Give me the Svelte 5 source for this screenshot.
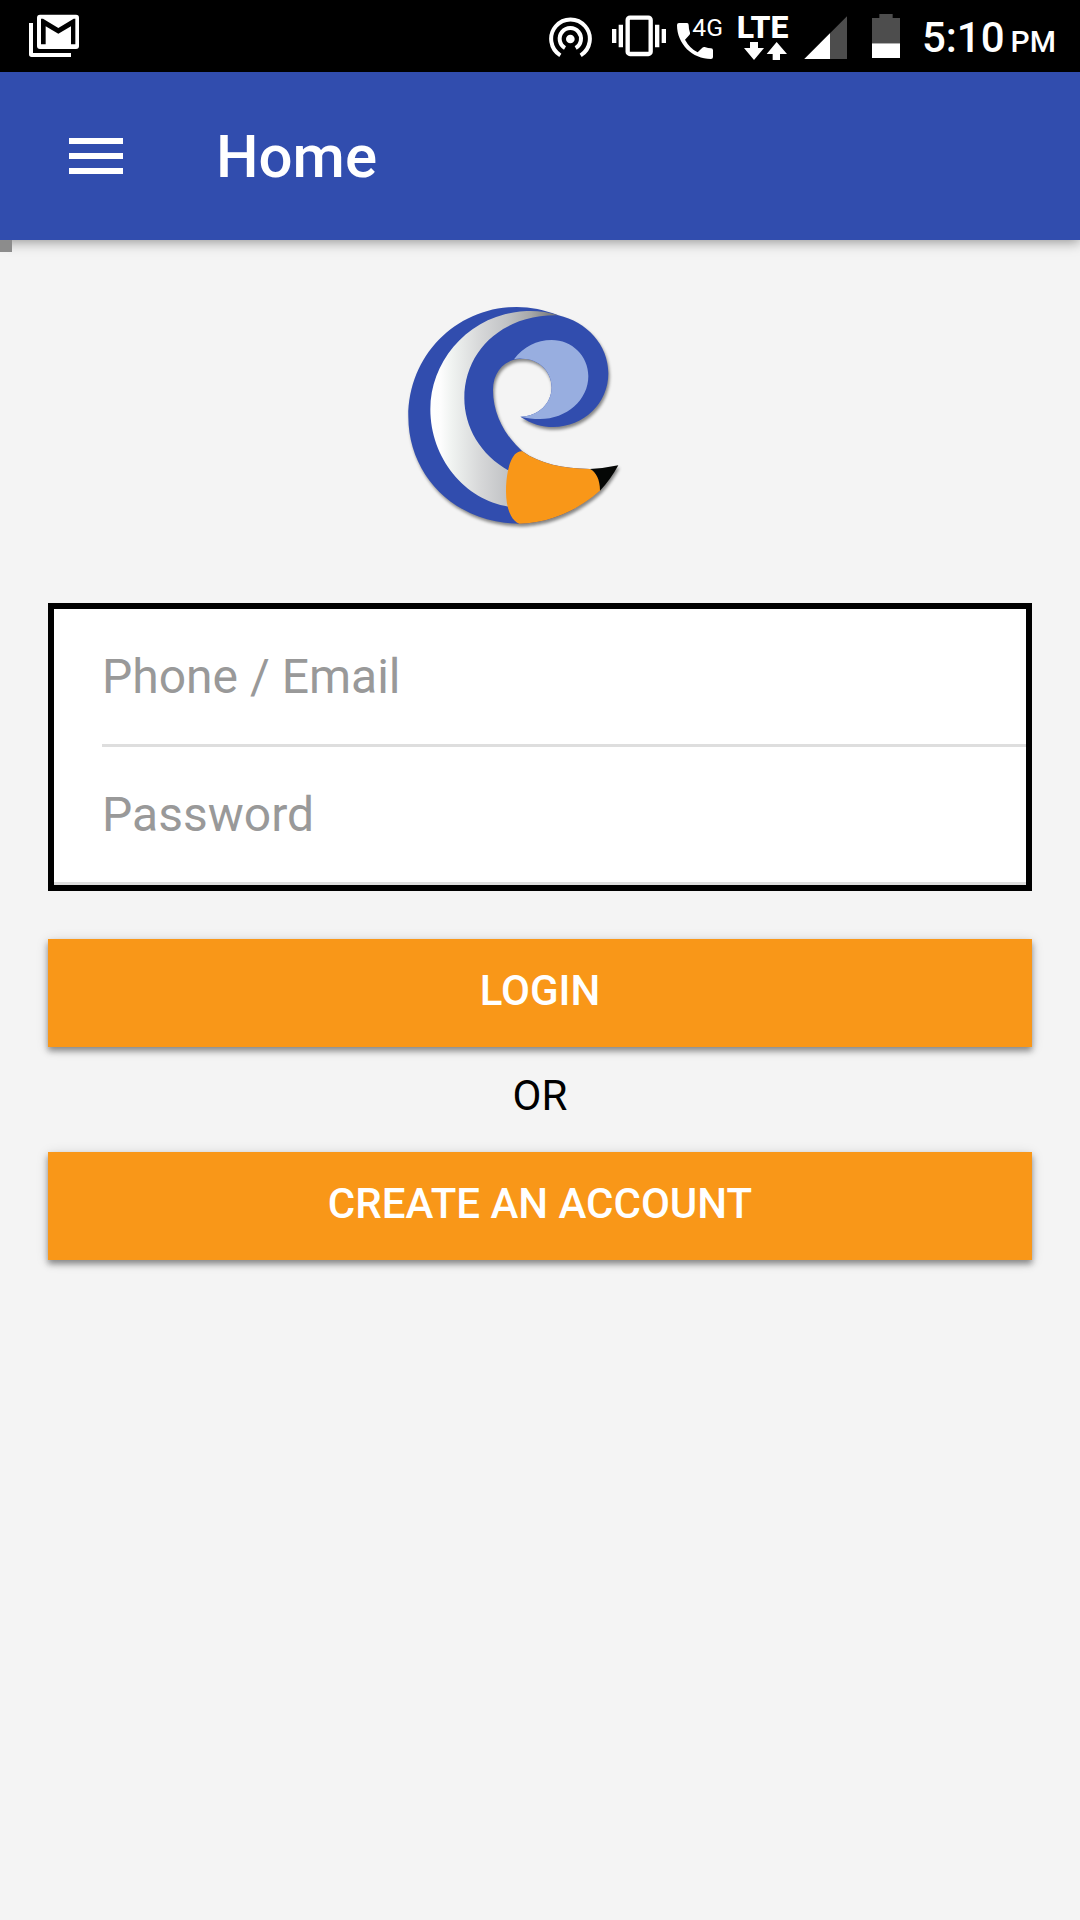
<script>
  let account = $state('');
  let password = $state('');
</script>

<div class="screen">
  <div class="status">
    <svg class="mail" viewBox="84 0 156 216" aria-hidden="true">
      <path d="M87 69h12v90h114v12H95q-8 0-8-8z" fill="#fff" />
      <rect x="111" y="44" width="126" height="103" rx="9" fill="#fff" />
      <path d="M123 133V56h6l46 28 46-28h5v77h-13V79l-38 22-38-22v54z" fill="#000" />
    </svg>
    <div class="tray">
      <svg class="hotspot" viewBox="54 0 165 216" aria-hidden="true">
        <circle cx="121" cy="117" r="13" fill="#fff" />
        <g fill="none" stroke="#fff" stroke-width="12">
          <path d="M105 144a32 32 0 1 1 32 0" />
          <path d="M91 166a58 58 0 1 1 61 0" />
        </g>
      </svg>
      <svg class="vibrate" viewBox="243 0 168 216" aria-hidden="true">
        <rect x="293" y="53" width="69" height="109" rx="7" fill="none" stroke="#fff" stroke-width="13" />
        <path d="M246 87h13v42h-13zM266 74h13v68h-13zM375 74h13v68h-13zM395 87h13v42h-13z" fill="#fff" />
      </svg>
      <svg class="call" viewBox="435 0 162 216" aria-hidden="true">
        <path d="M447 69h24q5 0 5 6 0 12 4 23 1 4-2 7l-13 14q14 26 38 38l14-14q3-3 7-2 11 4 19 4 6 0 6 6v20q0 6-6 6C487 177 441 132 441 75q0-6 6-6z" fill="#fff" />
        <text class="net" x="487" y="109">4G</text>
      </svg>
      <svg class="lte" viewBox="621 0 177 216" aria-hidden="true">
        <text class="band" x="620" y="113">LTE</text>
        <path d="M660 126h24v18h18l-30 36-30-36h18zM740 126l31 36h-21v18h-22v-18h-18z" fill="#fff" />
      </svg>
      <svg class="signal" viewBox="42 0 177 216" aria-hidden="true">
        <path d="M171 49v128H43z" fill="#4d4d4d" />
        <path d="M120 100v77H43z" fill="#fff" />
      </svg>
      <svg class="battery" viewBox="243 0 129 216" aria-hidden="true">
        <path d="M268 42h40v12h22v76h-84V54h22z" fill="#4d4d4d" />
        <path d="M246 130h84v44h-84z" fill="#fff" />
      </svg>
      <div class="clock">5:10<span>PM</span></div>
    </div>
  </div>

  <header>
    <button class="menu" aria-label="Open menu">
      <i></i><i></i><i></i>
    </button>
    <h1>Home</h1>
  </header>

  <main>
    <div class="marker"></div>
    <svg class="logo" viewBox="0 0 900 750" role="img" aria-label="Swan logo">
      <defs>
        <linearGradient id="feather" gradientUnits="userSpaceOnUse" x1="121" y1="0" x2="500" y2="0">
          <stop offset="0" stop-color="#fff" />
          <stop offset="0.08" stop-color="#fdfdfd" />
          <stop offset="0.17" stop-color="#f0f3f1" />
          <stop offset="0.4" stop-color="#d6d7d8" />
          <stop offset="0.6" stop-color="#c2c4c6" />
          <stop offset="0.8" stop-color="#a6a7a8" />
          <stop offset="1" stop-color="#707173" />
        </linearGradient>
        <filter id="shade" x="-10%" y="-10%" width="120%" height="120%" color-interpolation-filters="sRGB">
          <feDropShadow dx="4" dy="8" stdDeviation="4" flood-color="#000" flood-opacity="0.45" />
        </filter>
      </defs>
      <g filter="url(#shade)">
        <path fill="#314dae" d="M505 76C462 59 422 51 380 51C200 51 55 195 55 380C55 558 198 701 388 701C470 701 560 665 630 601L600 537C520 536 450 522 397 484C342 434 309 370 309 300C309 245 345 206 397 206C446 206 485 244 485 292C485 340 445 380 391 380C425 402 455 411 490 411C582 411 655 340 655 250C655 165 590 95 505 76Z" />
        <path fill="#98aee0" d="M372 208C400 170 440 150 485 150C546 150 595 198 595 258C595 330 530 387 450 387C430 387 410 385 391 380C445 380 485 340 485 292C485 244 446 206 397 206Q383 205 372 208Z" />
        <path fill="url(#feather)" d="M505 76C475 66 445 62 410 63C240 70 121 210 121 358C121 505 225 630 356 650L358 543C270 495 223 410 223 325C223 180 340 72 505 76Z" />
        <path fill="#f99718" d="M397 484C365 480 348 540 348 605C348 650 362 692 388 701C470 701 560 665 632 600C630 570 622 545 599 537C520 536 450 522 397 484Z" />
        <path fill="#050706" d="M600 537Q643 535 685 526C670 553 652 580 630 602C630 568 618 546 600 537Z" />
      </g>
    </svg>

    <form onsubmit={(e) => e.preventDefault()}>
      <div class="fields">
        <input type="text" placeholder="Phone / Email" aria-label="Phone / Email" bind:value={account} />
        <input type="password" placeholder="Password" aria-label="Password" bind:value={password} />
      </div>
      <button class="action" type="submit">LOGIN</button>
      <p>OR</p>
      <button class="action" type="button">CREATE AN ACCOUNT</button>
    </form>
  </main>
</div>

<style>
  :global(body) {
    margin: 0;
    background: #f4f4f4;
  }
  .screen {
    display: flex;
    flex-direction: column;
    min-height: 100vh;
    background: #f4f4f4;
    color: #000;
    font-family: Roboto, "Liberation Sans", sans-serif;
  }
  .status {
    display: flex;
    justify-content: space-between;
    padding: 0 24px 0 28px;
    background: #000;
    color: #fff;
  }
  .status svg {
    height: 72px;
    flex: none;
  }
  .tray {
    display: flex;
    gap: 8px;
  }
  .mail { width: 52px; }
  .hotspot { width: 55px; }
  .vibrate { width: 56px; }
  .call { width: 54px; }
  .lte { width: 59px; }
  .signal { width: 59px; }
  .battery { width: 43px; }
  .net {
    fill: #fff;
    font: 74px Roboto, "Liberation Sans", sans-serif;
  }
  .band {
    fill: #fff;
    font: 800 96px Roboto, "Liberation Sans", sans-serif;
  }
  .clock {
    display: flex;
    align-items: baseline;
    gap: 6px;
    font-size: 42px;
    font-weight: 500;
    line-height: 76px;
    height: 72px;
  }
  .clock span {
    font-size: 30px;
  }
  header {
    display: flex;
    align-items: center;
    gap: 93px;
    height: 168px;
    padding: 0 69px;
    background: #314dae;
    color: #fff;
    box-shadow: 0 2px 12px rgba(0, 0, 0, 0.4);
    z-index: 1;
  }
  .menu {
    display: flex;
    flex-direction: column;
    gap: 9px;
    width: 54px;
    padding: 0;
    border: 0;
    background: none;
  }
  .menu i {
    height: 6px;
    background: #fff;
  }
  h1 {
    margin: 0;
    padding-top: 2px;
    font-size: 60px;
    font-weight: 500;
    line-height: 72px;
  }
  main {
    display: flex;
    flex-direction: column;
    position: relative;
    padding: 50px 48px;
    z-index: 2;
  }
  .marker {
    position: absolute;
    left: 0;
    top: 0;
    width: 12px;
    height: 12px;
    background: #8c8c8c;
  }
  .logo {
    width: 300px;
    height: 250px;
    align-self: center;
  }
  form {
    display: flex;
    flex-direction: column;
    margin-top: 63px;
  }
  .fields {
    display: flex;
    flex-direction: column;
    border: 6px solid #000;
    background: #fff;
    margin-bottom: 48px;
  }
  input {
    box-sizing: border-box;
    height: 138px;
    margin: 0;
    padding: 0;
    border: 0;
    border-bottom: 3px solid #dedede;
    border-radius: 0;
    outline: 0;
    background: #fff;
    color: #000;
    font: 48px Roboto, "Liberation Sans", sans-serif;
  }
  input[type='text'] {
    margin-left: 48px;
  }
  input[type='password'] {
    padding-left: 48px;
  }
  input::placeholder {
    color: #999;
    opacity: 1;
  }
  .action {
    height: 108px;
    padding: 0 24px 6px;
    border: 0;
    background: #f99718;
    color: #fff;
    font: 500 42px Roboto, "Liberation Sans", sans-serif;
    box-shadow: 0 4px 6px rgba(0, 0, 0, 0.38), 0 2px 12px rgba(0, 0, 0, 0.14);
  }
  p {
    margin: 0;
    padding: 19px 0 26px;
    text-align: center;
    font-size: 42px;
    line-height: 60px;
  }
</style>
